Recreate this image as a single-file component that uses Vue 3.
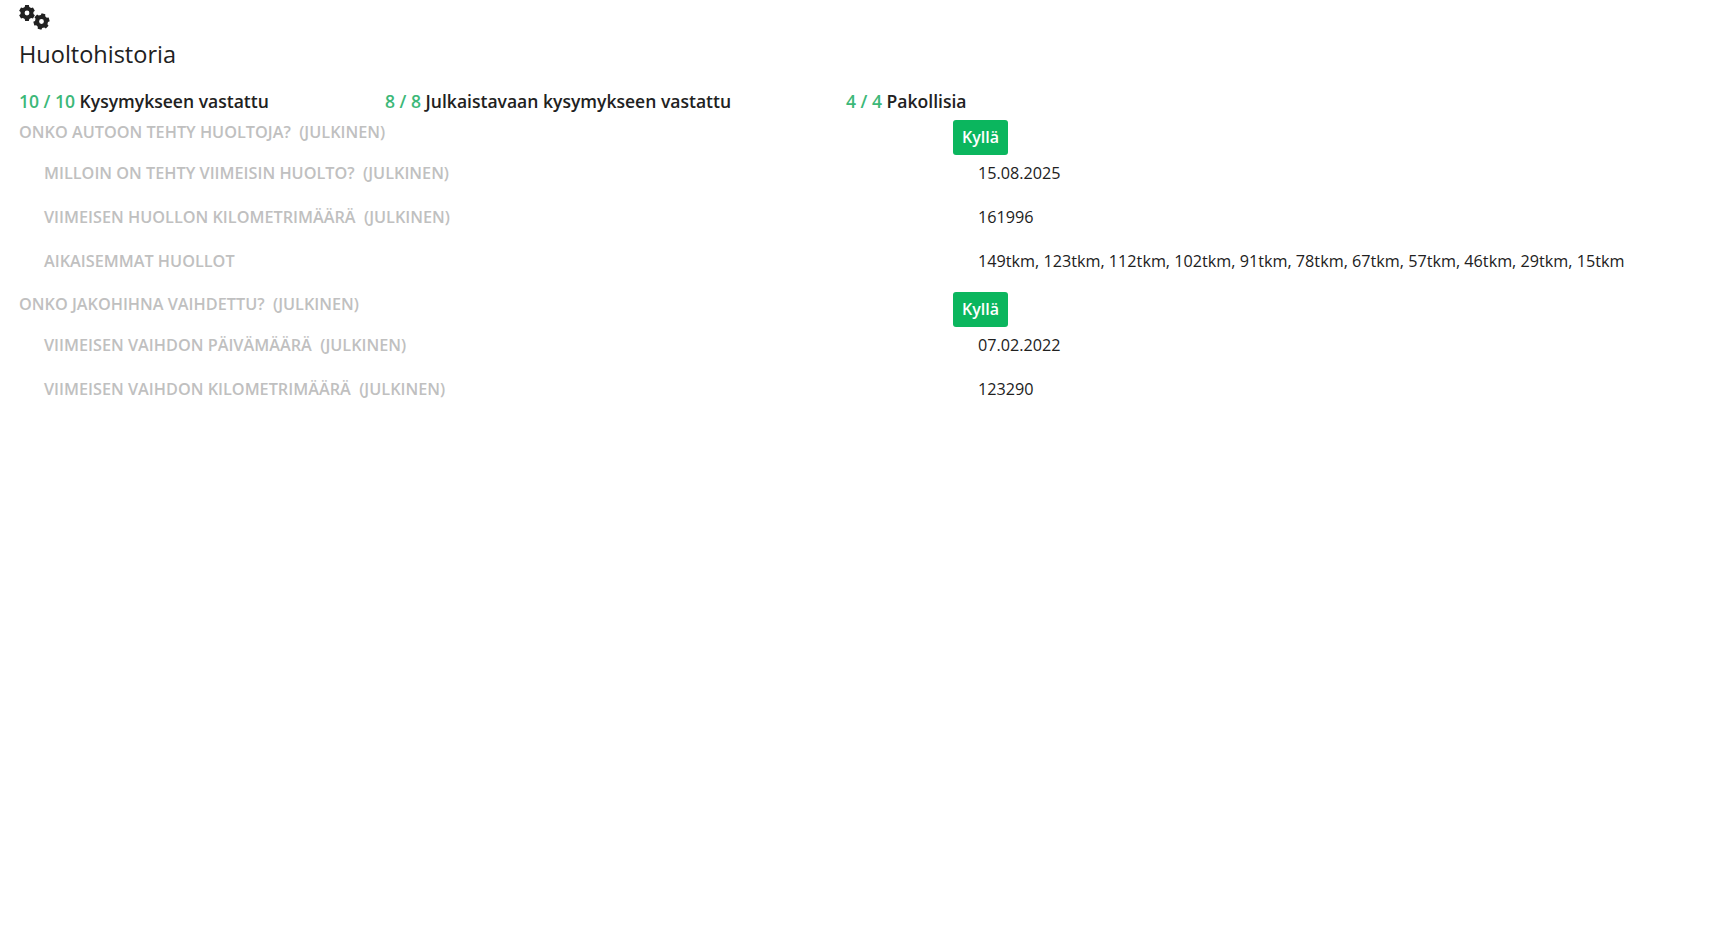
<script setup>
function gear(cx, cy, outer, inner, hole, teeth, rot) {
  const step = (Math.PI * 2) / teeth
  const pts = []
  for (let i = 0; i < teeth; i++) {
    const a = rot + i * step
    const w = step * 0.22
    const v = step * 0.34
    pts.push([a - v, inner], [a - w, outer], [a + w, outer], [a + v, inner])
  }
  const d = pts
    .map(([a, r], i) => `${i ? 'L' : 'M'}${(cx + r * Math.cos(a)).toFixed(2)} ${(cy + r * Math.sin(a)).toFixed(2)}`)
    .join('') + 'Z'
  return `${d}M${cx - hole} ${cy}a${hole} ${hole} 0 1 0 ${hole * 2} 0a${hole} ${hole} 0 1 0 ${-hole * 2} 0Z`
}
const gears = gear(8, 9, 8.2, 6.5, 2.4, 6, -Math.PI / 2) + gear(22.5, 17.5, 8.2, 6.5, 2.4, 6, -Math.PI / 2 + 0.25)

const stats = [
  { value: '10 / 10', label: 'Kysymykseen vastattu', cls: 'w1' },
  { value: '8 / 8', label: 'Julkaistavaan kysymykseen vastattu', cls: 'w2' },
  { value: '4 / 4', label: 'Pakollisia', cls: 'w3' },
]
const groups = [
  {
    label: 'ONKO AUTOON TEHTY HUOLTOJA?',
    badge: 'Kyllä',
    children: [
      { label: 'MILLOIN ON TEHTY VIIMEISIN HUOLTO?', pub: true, value: '15.08.2025' },
      { label: 'VIIMEISEN HUOLLON KILOMETRIMÄÄRÄ', pub: true, value: '161996' },
      { label: 'AIKAISEMMAT HUOLLOT', pub: false, value: '149tkm, 123tkm, 112tkm, 102tkm, 91tkm, 78tkm, 67tkm, 57tkm, 46tkm, 29tkm, 15tkm' },
    ],
  },
  {
    label: 'ONKO JAKOHIHNA VAIHDETTU?',
    badge: 'Kyllä',
    children: [
      { label: 'VIIMEISEN VAIHDON PÄIVÄMÄÄRÄ', pub: true, value: '07.02.2022' },
      { label: 'VIIMEISEN VAIHDON KILOMETRIMÄÄRÄ', pub: true, value: '123290' },
    ],
  },
]
</script>

<template>
  <main class="page">
    <svg class="icon" width="31" height="26" viewBox="0 0 31 26" aria-hidden="true">
      <path :d="gears" fill="#212121" fill-rule="evenodd" />
    </svg>
    <h1 class="title">Huoltohistoria</h1>
    <div class="stats">
      <div v-for="s in stats" :key="s.label" class="stat" :class="s.cls">
        <span class="num">{{ s.value }}</span> {{ s.label }}
      </div>
    </div>
    <div class="list">
      <section v-for="g in groups" :key="g.label" class="group">
        <div class="row parent">
          <div class="label">{{ g.label }}&nbsp; (JULKINEN)</div>
          <div class="answer"><span class="badge">{{ g.badge }}</span></div>
        </div>
        <div v-for="r in g.children" :key="r.label" class="row child">
          <div class="label">{{ r.label }}<template v-if="r.pub">&nbsp; (JULKINEN)</template></div>
          <div class="answer">{{ r.value }}</div>
        </div>
      </section>
    </div>
  </main>
</template>

<style scoped>
.page {
  font-family: "Open Sans", sans-serif;
  color: #212121;
  padding: 4px 19px 0;
  font-size: 16.2px;
}
.icon { display: block; }
.title {
  margin: 8px 0 0;
  font-size: 23.5px;
  line-height: 32px;
  font-weight: 500;
}
.stats {
  display: flex;
  margin-top: 19px;
  font-size: 17.55px;
  line-height: 24px;
  font-weight: 560;
}
.w1 { width: 366px; }
.w2 { width: 461px; }
.num { color: #3cb878; }
.list { margin-top: 7px; }
.group { padding-bottom: 5px; }
.row {
  display: grid;
  grid-template-columns: 934px 1fr;
  line-height: 24px;
}
.parent { height: 35px; }
.child { height: 44px; padding-top: 6px; box-sizing: border-box; }
.label {
  color: #c0c0c0;
  font-weight: 600;
  font-size: 16.25px;
}
.child .label,
.child .answer { padding-left: 25px; }
.badge {
  display: inline-block;
  height: 35px;
  width: 55px;
  box-sizing: border-box;
  border-radius: 3px;
  background: #0bb65e;
  color: #fff;
  font-size: 16px;
  font-weight: 600;
  text-align: center;
  line-height: 35px;
}
</style>
